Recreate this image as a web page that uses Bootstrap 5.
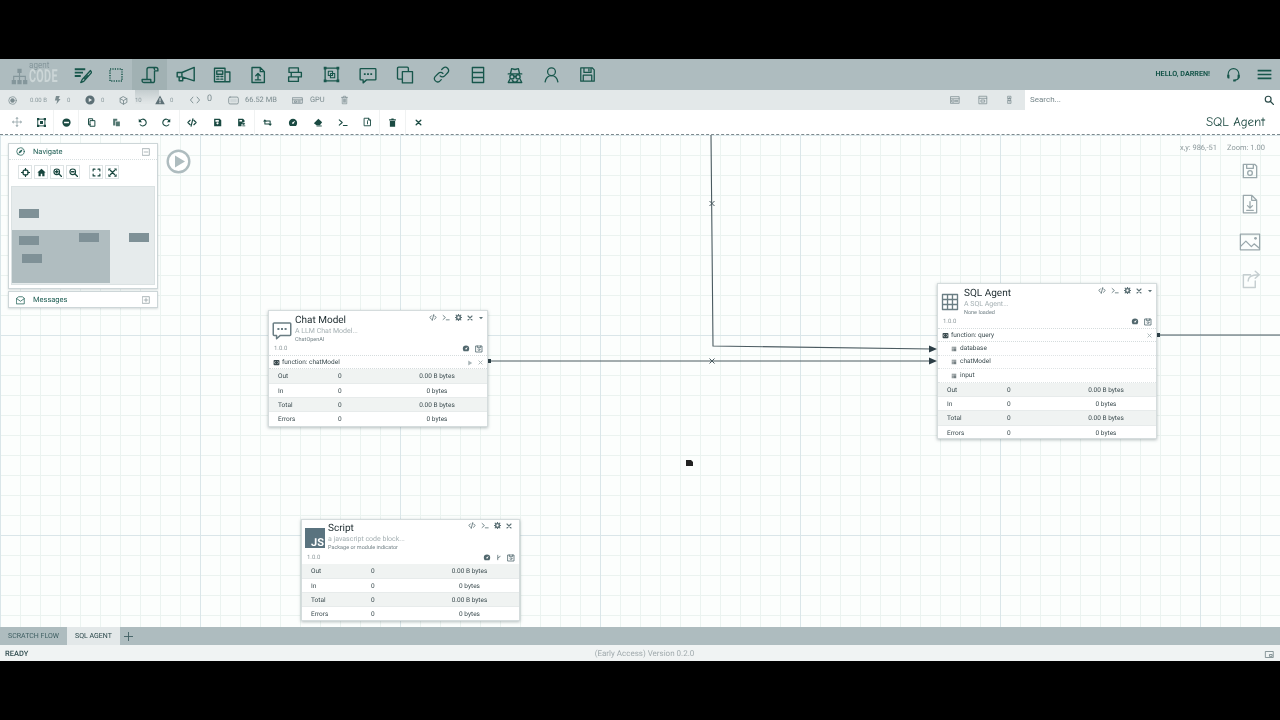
<!DOCTYPE html>
<html lang="en">
<head>
<meta charset="utf-8">
<title>Agent Code</title>
<link href="https://cdn.jsdelivr.net/npm/bootstrap@5.3.0/dist/css/bootstrap.min.css" rel="stylesheet">
<style>
html,body{height:100%;overflow:hidden}
body{background:#000;font-family:Roboto,"Liberation Sans",sans-serif;color:#33454a;text-rendering:geometricPrecision}
.frame{height:720px;padding:59px 0}
.app{height:602px;background:#fff;filter:blur(.3px)}
.ic{display:block;fill:none;stroke:currentColor;stroke-width:1.8;stroke-linecap:round;stroke-linejoin:round}
.solid{fill:currentColor;stroke:none}

.topbar{height:31px;background:#aebcbf;color:#17564b;flex:none}
.logo{width:66px;height:31px;padding-left:11px;color:#84969b;flex:none}
.logo-words{line-height:1;margin-left:1px;margin-top:-4px}
.logo-a{font-size:9.500px;color:#84969b;line-height:8px;display:block;margin-left:0;transform:scaleX(.85);transform-origin:left}
.logo-c{font-size:18px;font-weight:700;color:#ccd6d7;display:block;line-height:14px;transform:scaleX(.6);transform-origin:left;width:28px;letter-spacing:.5px}
.navcell{width:36.6px;height:31px;display:flex;align-items:center;justify-content:center;flex:none}
.navcell.tight{width:33px}
.navcell.on{background:#a1b1b3;width:35px}
.hello{font-size:7.200px;font-weight:700;color:#17564b;white-space:nowrap;margin-right:16px}
.ghost{position:absolute;left:135px;top:31px;width:24px;height:14px;background:linear-gradient(#bcc6c8,#dfe4e5 90%);opacity:.8}

.statusbar{height:20px;background:#e3e8e9;color:#7c8c90;flex:none;font-size:7.500px}
.st{position:relative;display:flex;align-items:center;height:20px;flex:none}
.st-tiny{font-size:6px;color:#8a999d}
.st-num{font-size:9px}
.searchwrap{width:255px;height:20px;background:#fff;padding:0 6px 0 5px}
.searchwrap input{border:0;outline:0;font-size:8px;width:200px;padding:0;background:transparent;color:#77878b;font-family:inherit}
.searchwrap input::placeholder{color:#77878b;opacity:1}

.toolbar{height:25px;background:#fff;border-bottom:1px dashed #7d8a8e;flex:none;color:#1a4a42}
.tb{width:25.1px;height:24px;display:flex;align-items:center;justify-content:center;flex:none}
.tb-first{margin-left:4px}
.tb-sep{border-right:1px solid #f0f2f2}
.flowtitle{font-family:"Comic Sans MS","Comic Neue",cursive;font-size:13px;color:#17453d;margin-right:15px;padding-top:1px;white-space:nowrap}

.canvas{position:relative;flex:1 1 auto;min-height:0;overflow:hidden;background-color:#fcfefd}
.gridlines{position:absolute;inset:0;background-image:
linear-gradient(to right,#dae6e9 1px,transparent 1px),linear-gradient(to bottom,#dae6e9 1px,transparent 1px),
linear-gradient(to right,#ebf3f0 1px,transparent 1px),linear-gradient(to bottom,#ebf3f0 1px,transparent 1px);
background-size:200px 200px,200px 200px,20px 20px,20px 20px}
.wires{position:absolute;left:0;top:0;width:1280px;height:492px}
.coords{position:absolute;top:7px;left:1180px;font-size:7.500px;color:#8b989b;white-space:nowrap;display:flex;gap:10px}
.rightdock{position:absolute;left:1239px;top:28px;width:22px;color:#9aa8ac;display:flex;flex-direction:column;align-items:center}
.dock-a{margin-top:15px}
.dock-b{margin-top:17px}
.dock-c{color:#c5ced0}
.runbtn{position:absolute;left:166px;top:14px;color:#aebcbf}

.panel{position:absolute;left:8px;width:150px;background:#fff;border:1px solid #cdd6d8;box-shadow:0 1px 2px rgba(60,80,85,.2)}
.panel-h{height:16px;padding:0 7px;font-size:7.500px;color:#1c5c52;gap:8px}
.nav-panel{top:8px;height:146px}
.msg-panel{top:156px;height:17px}
.panel-h .end{margin-left:auto;color:#7b8a8e}
.panel-nav{border-bottom:1px dotted #d8dfe0}
.navbtns{height:26px;padding:5px 0 0 9px;gap:2px}
.navbtn{width:14px;height:14px;border:1px solid #dde3e4;display:flex;align-items:center;justify-content:center;color:#17453d}
.navbtn.gap{margin-left:7px}
.minimap{position:relative;margin:0 2px;height:99px;background:#e6ebec;border:1px solid #dbe2e3}
.mm-view{position:absolute;left:0;top:43px;width:98px;height:53px;background:#b0bdc0}
.mm-n{position:absolute;width:20px;height:9px;background:#7f9197}

.node{position:absolute;background:#fff;border:1px solid #d5dcdd;box-shadow:0 1px 3px rgba(50,70,75,.35)}
.chat-node{left:268px;top:175px;width:220px;height:117px}
.sql-node{left:937px;top:148px;width:220px;height:156px}
.js-node{left:301px;top:384px;width:219px;height:102px}
.js-node .n-head{padding-top:3px}
.n-head{height:33px;padding:4px 3px 0 3px}
.n-icon{width:20px;margin-right:3px;padding-top:5px;color:#6a7d83;flex:none}
.n-title{font-size:10px;line-height:12px;color:#1c2a2e}
.n-sub{font-size:7px;line-height:9px;color:#a5b0b3}
.n-pkg{font-size:5.500px;line-height:8px;color:#748388}
.n-acts{margin-left:auto;gap:5px;color:#5f7378;margin-top:-1px;align-self:flex-start}
.n-ver{height:11px;padding:0 4px 2px 5px;font-size:6px;color:#8d999c}
.n-ver .r{margin-left:auto;gap:5px;color:#52686e}
.n-fn{height:14px;padding:1px 4px 0;font-size:6.500px;border-top:1px dotted #d5dcdd;border-bottom:1px dotted #d5dcdd;color:#3a4a4e;gap:2px}
.n-fn .r{margin-left:auto;gap:5px;color:#a9b5b8}
.n-p{height:13.500px;padding:1px 0 0 13px;font-size:6.500px;color:#3a4a4e;border-bottom:1px dotted #dfe4e5;gap:3px}
.tbl{table-layout:fixed;--bs-table-striped-bg:#f0f3f2;--bs-table-bg:transparent;--bs-table-border-color:#e3e8e8;--bs-table-color:#3a4a4e;--bs-table-striped-color:#3a4a4e;font-size:6.500px;margin:0}
.tbl td{height:14.200px;padding:1px 0 0;line-height:10px;vertical-align:middle;border-bottom:1px solid #e7ebeb}
.tbl tr:last-child td{border-bottom:0}
.tbl td:nth-child(1){width:62px;padding-left:9px}
.tbl td:nth-child(2){width:56px;padding-left:7px}
.tbl td:nth-child(3){text-align:center}
.jsbox{width:20px;height:20px;background:#5a737f;color:#fff;font-weight:700;font-size:11px;line-height:11px;text-align:right;padding:9px 1px 0 0;margin-top:5px}

.tabsbar{height:18px;background:#aebcbf;flex:none;font-size:7px;color:#3f5f62}
.tabx{height:18px;display:flex;align-items:center;justify-content:center;white-space:nowrap;width:67px}
.tabx.on{background:#e3e8e9;color:#1f3d40;width:53px}
.footbar{height:16px;background:#f0f3f3;flex:none;font-size:7.500px;padding:2px 5px 0}
.foot-side{flex:1 1 0}
.foot-ready{color:#2e4a4d;font-weight:500}
.foot-ver{color:#a0aaad;font-size:8px;padding-left:9px}
</style>
</head>
<body>
<svg width="0" height="0" class="position-absolute">
<defs>
<symbol id="notes" viewBox="0 0 24 24"><path class="solid" d="M1 3h14v2.600H1zM1 7.500h11v2.600H1zM1 12h8v2.600H1z"/><path d="M22 6 11 18l-2 4 4-1.500L23.500 8.500zM13.500 15.500l2 2.200M16 15.500l-1.600 3M18.500 13l-2 2"/></symbol>
<symbol id="dash" viewBox="0 0 24 24"><rect x="4" y="4" width="16" height="16" stroke-width="2" stroke-dasharray="1.600 1.600" stroke-linecap="butt"/></symbol>
<symbol id="scroll" viewBox="0 0 24 24"><path d="M8 18V4.500A2.500 2.500 0 0 1 10.500 2H20a2.500 2.500 0 0 1 2.500 2.500V6.500H18V19.500A2.500 2.500 0 0 1 15.500 22H4a2.500 2.500 0 0 1-2.500-2.500V18H13v1.500A2.500 2.500 0 0 0 15.500 22M18 4.500A2.500 2.500 0 0 0 15.500 2"/></symbol>
<symbol id="mega" viewBox="0 0 24 24"><path d="M1.500 9.500h6L23 3v17L7.500 15h-6zM7.500 9.500V15M4 15v5h4.500v-4.200"/></symbol>
<symbol id="news" viewBox="0 0 24 24"><path d="M2 3h14v18H2zM16 8h6.500v13H16"/><path d="M5 6.500h8V11H5zM5 14h3M5 17.500h3M10.500 14h2.500M10.500 17.500h2.500"/></symbol>
<symbol id="fileup" viewBox="0 0 24 24"><path d="M4 2h11l5.500 5.500V22H4zM15 2v5.500h5.500"/><path d="M12 17v-6.500M9 13l3-3 3 3M8.500 18.500h7"/></symbol>
<symbol id="stack" viewBox="0 0 24 24"><path d="M4 2.500h12.500v6H4zM7 8.500h13.500v6H7zM3.500 14.500h13v6h-13z"/></symbol>
<symbol id="grp" viewBox="0 0 24 24"><path d="M3 3h18v18H3z"/><path d="M7.500 7.500h6v6h-6zM10.500 10.500h6v6h-6z" stroke-width="1.500"/><path class="solid" d="M1 1h4v4H1zM19 1h4v4h-4zM1 19h4v4H1zM19 19h4v4h-4z"/></symbol>
<symbol id="chat" viewBox="0 0 24 24"><path d="M2.500 3.500h19a1 1 0 0 1 1 1v13a1 1 0 0 1-1 1H10l-4.500 4v-4h-3a1 1 0 0 1-1-1v-13a1 1 0 0 1 1-1z"/><path class="solid" d="M6.500 9.500h2.400v2.400H6.500zM10.800 9.500h2.400v2.400h-2.400zM15.100 9.500h2.400v2.400h-2.400z"/></symbol>
<symbol id="copy" viewBox="0 0 24 24"><path d="M8.500 7.500h13.500v15H8.500zM8.500 17.500H3.500a1.500 1.500 0 0 1-1.500-1.500V3a1.500 1.500 0 0 1 1.500-1.500H15a1.500 1.500 0 0 1 1.500 1.500v4.500"/></symbol>
<symbol id="link" viewBox="0 0 24 24"><path d="M10 14a4.500 4.500 0 0 0 6.500 0l4.500-4.800a4.600 4.600 0 0 0-6.500-6.400L12.300 5M14 10.500a4.500 4.500 0 0 0-6.500 0L3 15a4.600 4.600 0 0 0 6.500 6.400l2.200-2.200"/></symbol>
<symbol id="rows" viewBox="0 0 24 24"><path d="M4.500 2h15v20h-15zM4.500 8.700h15M4.500 15.300h15"/></symbol>
<symbol id="spy" viewBox="0 0 24 24"><path d="M3 10.500h18M6 10l1.500-6.500 4.500 1.200 4.500-1.200L18 10"/><circle cx="8" cy="14.500" r="2.800"/><circle cx="16" cy="14.500" r="2.800"/><path d="M10.800 14h2.400M5 18l-2 4h18l-2-4M8.500 19.500l3.500 2.500 3.500-2.500"/></symbol>
<symbol id="user" viewBox="0 0 24 24"><circle cx="12" cy="8" r="5.500"/><path d="M3 22.500c1-5.500 4.500-9 9-9s8 3.500 9 9"/></symbol>
<symbol id="disk" viewBox="0 0 24 24"><path d="M2.500 2.500h16l3 3v16h-19zM7 2.500v6.500h10V2.500M6 21.500V13h12v8.500M14 4.500v2.500"/></symbol>
<symbol id="headset" viewBox="0 0 24 24"><path d="M3.500 15V11a8.500 8.500 0 0 1 17 0v4M20.500 15c0 3-3 5.500-6 6"/><path class="solid" d="M2 12.500h3.500v6H4a2 2 0 0 1-2-2zM18.500 12.500H22v4a2 2 0 0 1-2 2h-1.500zM11.500 20h4v3h-4z"/></symbol>
<symbol id="burger" viewBox="0 0 24 24"><path class="solid" d="M1 4.500h22v2.600H1zM1 10.700h22v2.600H1zM1 16.900h22v2.600H1z"/></symbol>
<symbol id="org" viewBox="0 0 24 24"><path class="solid" d="M9 1h6v6H9zM1 17h6v6H1zM9 17h6v6H9zM17 17h6v6h-6zM11.200 7h1.600v4H21v6h-1.600v-4.400h-6.600V17h-1.600v-4.400H4.600V17H3v-6h8.200z"/></symbol>
<symbol id="dot" viewBox="0 0 24 24"><circle cx="12" cy="12" r="10" stroke-width="2"/><circle class="solid" cx="12" cy="12" r="6"/></symbol>
<symbol id="bolt" viewBox="0 0 24 24"><path class="solid" d="M8 1h10l-3 8h5L9 23l2-10H5z"/></symbol>
<symbol id="playc" viewBox="0 0 24 24"><path class="solid" fill-rule="evenodd" d="M12 1a11 11 0 1 1 0 22 11 11 0 0 1 0-22zM9 7v10l8-5z"/></symbol>
<symbol id="cube" viewBox="0 0 24 24"><path d="M12 2l9 5v10l-9 5-9-5V7z" stroke-width="2.400"/><path d="M3 7l9 5 9-5M12 12v10" stroke-width="2.400"/></symbol>
<symbol id="warn" viewBox="0 0 24 24"><path class="solid" fill-rule="evenodd" d="M12 1l11.500 21H.5zM10.700 8v7.500h2.600V8zM10.700 17v2.500h2.600V17z"/></symbol>
<symbol id="code" viewBox="0 0 24 24"><path d="M7 5l-6 7 6 7M17 5l6 7-6 7" stroke-width="2.200"/></symbol>
<symbol id="mem" viewBox="0 0 24 24"><rect x="1.500" y="4.500" width="21" height="15" rx="3"/><rect x="5" y="8" width="14" height="8" fill="#cfd7d9" stroke="none"/></symbol>
<symbol id="gpu" viewBox="0 0 24 24"><path d="M1.500 6h21v12h-21zM1.500 10.500h21M6 13h4v3H6zM13 13h5M13 15.500h5"/></symbol>
<symbol id="trashl" viewBox="0 0 24 24"><path d="M4 5h16M9 5V2h6v3M6 5v17h12V5M9.500 9v9M12 9v9M14.500 9v9"/></symbol>
<symbol id="idc" viewBox="0 0 24 24"><path d="M2 4h20v16H2zM2 9h20M5 12h5v5H5zM13 13h6M13 16h6"/></symbol>
<symbol id="cal" viewBox="0 0 24 24"><path d="M3 3h18v18H3zM3 8h18M8 12h8v5H8z"/></symbol>
<symbol id="tower" viewBox="0 0 24 24"><path d="M8 2h8v6H8zM9 8h6v5H9zM8 13h8v8H8zM11 5h2M10.500 17h3"/></symbol>
<symbol id="search" viewBox="0 0 24 24"><circle cx="10" cy="10" r="7" stroke-width="2.800"/><path d="M15 15l7.500 7.500" stroke-width="3.200"/></symbol>
<symbol id="move" viewBox="0 0 24 24"><path d="M12 2v20M2 12h20" stroke-width="2"/><path class="solid" d="M12 0l4 4H8zM12 24l-4-4h8zM0 12l4-4v8zM24 12l-4 4V8z"/></symbol>
<symbol id="sel" viewBox="0 0 24 24"><path stroke-width="2.400" d="M3 3h18v18H3z"/><path class="solid" d="M0 0h6v6H0zM18 0h6v6h-6zM0 18h6v6H0zM18 18h6v6h-6zM8 8h8v8H8z"/></symbol>
<symbol id="minusc" viewBox="0 0 24 24"><path class="solid" fill-rule="evenodd" d="M12 1a11 11 0 1 1 0 22 11 11 0 0 1 0-22zM5.500 10v4h13v-4z"/></symbol>
<symbol id="cpy" viewBox="0 0 24 24"><path stroke-width="2.600" d="M9 7h12v15H9zM9 18H4V2h11v5"/></symbol>
<symbol id="paste" viewBox="0 0 24 24"><path class="solid" d="M3 2h11v5H9v13H3zM10.500 9H21v13H10.500z" opacity=".75"/></symbol>
<symbol id="undo" viewBox="0 0 24 24"><path stroke-width="3" d="M5.500 7A9 9 0 1 1 6 18"/><path class="solid" d="M2 2v9h9z"/></symbol>
<symbol id="redo" viewBox="0 0 24 24"><path stroke-width="3" d="M18.500 7A9 9 0 1 0 18 18"/><path class="solid" d="M22 2v9h-9z"/></symbol>
<symbol id="codeb" viewBox="0 0 24 24"><path stroke-width="3" d="M7 6l-6 6 6 6M17 6l6 6-6 6M14.500 2l-5 20"/></symbol>
<symbol id="save" viewBox="0 0 24 24"><path class="solid" fill-rule="evenodd" d="M3 2h15l4 4v16H3zM6.500 5v5h9V5zM9 14a3 3 0 1 0 6 0 3 3 0 0 0-6 0z"/></symbol>
<symbol id="saveas" viewBox="0 0 24 24"><path class="solid" fill-rule="evenodd" d="M3 2h13l4 4v5h-5v5h-3v6H3zM6.500 5v4h7V5z"/><path class="solid" d="M14 14h3v-2l5 3.500-5 3.500v-2h-3zM14 20h8v2h-8z"/></symbol>
<symbol id="retw" viewBox="0 0 24 24"><path stroke-width="2.800" d="M5 8v8h11M19 16V8H8"/><path class="solid" d="M0 9l5-6 5 6zM14 15h10l-5 6z"/></symbol>
<symbol id="gauge" viewBox="0 0 24 24"><path class="solid" fill-rule="evenodd" d="M12 2a11 11 0 0 1 11 11c0 3-1 5.500-3 8H4c-2-2.500-3-5-3-8A11 11 0 0 1 12 2zM11 11a2.500 2.500 0 1 0 3.500 2.500L18 7z"/></symbol>
<symbol id="erase" viewBox="0 0 24 24"><path class="solid" d="M13 2l10 9-6 8H8l-7-5z"/><path class="solid" d="M8 20h14v2.500H8z"/></symbol>
<symbol id="term" viewBox="0 0 24 24"><path stroke-width="2.800" d="M2 5l8 7-8 7M13 20h10"/></symbol>
<symbol id="finfo" viewBox="0 0 24 24"><path stroke-width="2.400" d="M4 2h11l5 5v15H4zM15 2v5h5M12 11v6"/><path class="solid" d="M10.500 8h3v2h-3z"/></symbol>
<symbol id="trash" viewBox="0 0 24 24"><path class="solid" d="M3 3.500h6V1.500h6v2h6v3H3zM5 8h14v15H5z"/></symbol>
<symbol id="xx" viewBox="0 0 24 24"><path stroke-width="4.500" d="M4 4l16 16M20 4L4 20"/></symbol>
<symbol id="compass" viewBox="0 0 24 24"><circle cx="12" cy="12" r="10" stroke-width="2"/><path class="solid" d="M18 6l-4 8-8 4 4-8z"/></symbol>
<symbol id="minusb" viewBox="0 0 24 24"><path stroke-width="1.800" d="M2 2h20v20H2zM6.500 12h11"/></symbol>
<symbol id="plusb" viewBox="0 0 24 24"><path stroke-width="1.800" d="M2 2h20v20H2zM6.500 12h11M12 6.500v11"/></symbol>
<symbol id="mail" viewBox="0 0 24 24"><path stroke-width="2" d="M2 6l5-4h10l5 4v15H2zM2 7l10 7 10-7"/></symbol>
<symbol id="crossh" viewBox="0 0 24 24"><circle cx="12" cy="12" r="7" stroke-width="3"/><path stroke-width="3" d="M12 0v6M12 18v6M0 12h6M18 12h6"/></symbol>
<symbol id="home" viewBox="0 0 24 24"><path class="solid" d="M12 2l11 10h-3v10h-6v-7h-4v7H4V12H1z"/></symbol>
<symbol id="zin" viewBox="0 0 24 24"><circle cx="10" cy="10" r="7.500" stroke-width="3"/><path stroke-width="3.500" d="M16 16l7 7M6.500 10h7M10 6.500v7"/></symbol>
<symbol id="zout" viewBox="0 0 24 24"><circle cx="10" cy="10" r="7.500" stroke-width="3"/><path stroke-width="3.500" d="M16 16l7 7M6.500 10h7"/></symbol>
<symbol id="corners" viewBox="0 0 24 24"><path stroke-width="3" d="M3 8V3h5M16 3h5v5M21 16v5h-5M8 21H3v-5"/></symbol>
<symbol id="expand" viewBox="0 0 24 24"><path stroke-width="3.500" d="M6 6l12 12M18 6L6 18"/><path class="solid" d="M1 1h7L1 8zM23 1v7l-7-7zM1 23v-7l7 7zM23 23h-7l7-7z"/></symbol>
<symbol id="gear" viewBox="0 0 24 24"><circle cx="12" cy="12" r="6.500" stroke-width="5"/><path stroke-width="4" d="M12 1v3M12 20v3M1 12h3M20 12h3M4 4l2 2M18 18l2 2M20 4l-2 2M6 18l-2 2"/></symbol>
<symbol id="caret" viewBox="0 0 24 24"><path class="solid" d="M4 8h16l-8 9z"/></symbol>
<symbol id="calc" viewBox="0 0 24 24"><path stroke-width="2.400" d="M3 3h18v18H3zM7 3v5h10V3"/><circle cx="12" cy="14" r="3"/></symbol>
<symbol id="tbl" viewBox="0 0 24 24"><path stroke-width="1.800" d="M2 2h20v20H2zM2 8.700h20M2 15.300h20M8.700 2v20M15.300 2v20"/></symbol>
<symbol id="fnic" viewBox="0 0 24 24"><rect x="2" y="3" width="20" height="18" rx="3" class="solid"/><path d="M8 8l-3 4 3 4M16 8l3 4-3 4" stroke="#fff" stroke-width="2"/></symbol>
<symbol id="param" viewBox="0 0 24 24"><path class="solid" d="M3 3h18v18H3z" opacity=".7"/><path stroke="#fff" stroke-width="2" d="M3 8h18M8 8v13"/></symbol>
<symbol id="branch" viewBox="0 0 24 24"><path stroke-width="3" d="M7 3v18M7 14c0-4 10-2 10-7"/></symbol>
<symbol id="play" viewBox="0 0 24 24"><path class="solid" d="M5 2l16 10L5 22z"/></symbol>
<symbol id="fdisk" viewBox="0 0 24 24"><path stroke-width="2" d="M2 2h17l3 3v17H2zM7 2v6h10V2"/><circle cx="12" cy="15" r="3.500" stroke-width="2"/></symbol>
<symbol id="fdown" viewBox="0 0 24 24"><path stroke-width="1.500" d="M4 1.500h10l6 6v15H4zM14 1.500v6h6M12 9v8M9 14l3 3 3-3M8 19.500h8"/></symbol>
<symbol id="pic" viewBox="0 0 24 24"><path stroke-width="1.400" d="M1.500 3.500h21v17h-21zM1.500 17l6-6 6 6 3-3 6 5"/><circle cx="18" cy="8" r="1.500" class="solid"/></symbol>
<symbol id="share" viewBox="0 0 24 24"><path stroke-width="1.800" d="M18 14v8H3V6h9M9 14c0-5 4-8 13-8M18 1.500 23 6l-5 4.500"/></symbol>
</defs>
</svg>

<div class="frame">
<div class="app d-flex flex-column">

<div class="topbar d-flex align-items-center position-relative">
  <div class="logo d-flex align-items-center">
    <svg class="ic mt-1" width="17" height="19"><use href="#org"/></svg>
    <div class="logo-words"><span class="logo-a">agent</span><span class="logo-c">CODE</span></div>
  </div>
  <div class="navcell tight"><svg class="ic" width="18" height="18"><use href="#notes"/></svg></div>
  <div class="navcell tight"><svg class="ic" width="18" height="18"><use href="#dash"/></svg></div>
  <div class="navcell on"><svg class="ic" width="18" height="18"><use href="#scroll"/></svg></div>
  <div class="navcell"><svg class="ic" width="19" height="19"><use href="#mega"/></svg></div>
  <div class="navcell"><svg class="ic" width="18" height="18"><use href="#news"/></svg></div>
  <div class="navcell"><svg class="ic" width="18" height="18"><use href="#fileup"/></svg></div>
  <div class="navcell"><svg class="ic" width="18" height="18"><use href="#stack"/></svg></div>
  <div class="navcell"><svg class="ic" width="17" height="17"><use href="#grp"/></svg></div>
  <div class="navcell"><svg class="ic" width="18" height="18"><use href="#chat"/></svg></div>
  <div class="navcell"><svg class="ic" width="18" height="18"><use href="#copy"/></svg></div>
  <div class="navcell"><svg class="ic" width="17" height="17"><use href="#link"/></svg></div>
  <div class="navcell"><svg class="ic" width="18" height="18"><use href="#rows"/></svg></div>
  <div class="navcell"><svg class="ic" width="18" height="18"><use href="#spy"/></svg></div>
  <div class="navcell"><svg class="ic" width="17" height="17"><use href="#user"/></svg></div>
  <div class="navcell"><svg class="ic" width="17" height="17"><use href="#disk"/></svg></div>
  <div class="ms-auto d-flex align-items-center">
    <span class="hello">HELLO, DARREN!</span>
    <svg class="ic" width="15" height="15"><use href="#headset"/></svg>
    <svg class="ic ms-3 me-2" width="15" height="15"><use href="#burger"/></svg>
  </div>
  <div class="ghost"></div>
</div>

<div class="statusbar d-flex align-items-center">
  <div class="st" style="width:30px;padding-left:8px"><svg class="ic" width="9" height="9"><use href="#dot"/></svg></div>
  <div class="st st-tiny" style="width:22.500px">0.00 B</div>
  <div class="st" style="width:14.500px"><svg class="ic" width="9" height="10"><use href="#bolt"/></svg></div>
  <div class="st st-tiny" style="width:18px">0</div>
  <div class="st" style="width:16px;color:#5d7076"><svg class="ic" width="10" height="10"><use href="#playc"/></svg></div>
  <div class="st st-tiny" style="width:17.500px">0</div>
  <div class="st" style="width:16.500px"><svg class="ic" width="9" height="9"><use href="#cube"/></svg></div>
  <div class="st st-tiny" style="width:20px">10</div>
  <div class="st" style="width:15px;color:#5d7076"><svg class="ic" width="10" height="10"><use href="#warn"/></svg></div>
  <div class="st st-tiny" style="width:20px">0</div>
  <div class="st" style="width:17px"><svg class="ic" width="10" height="10"><use href="#code"/></svg></div>
  <div class="st st-num" style="width:21px">0</div>
  <div class="st" style="width:17px"><svg class="ic" width="11" height="11"><use href="#mem"/></svg></div>
  <div class="st" style="width:47px">66.52 MB</div>
  <div class="st" style="width:18px"><svg class="ic" width="11" height="11"><use href="#gpu"/></svg></div>
  <div class="st" style="width:30px">GPU</div>
  <div class="st"><svg class="ic" width="9" height="10"><use href="#trashl"/></svg></div>
  <div class="ms-auto d-flex align-items-center">
    <div class="st" style="width:28px"><svg class="ic" width="10" height="10"><use href="#idc"/></svg></div>
    <div class="st" style="width:27px"><svg class="ic" width="10" height="10"><use href="#cal"/></svg></div>
    <div class="st" style="width:20px"><svg class="ic" width="9" height="10"><use href="#tower"/></svg></div>
    <div class="searchwrap d-flex align-items-center justify-content-between">
      <input type="text" placeholder="Search...">
      <svg class="ic" width="10" height="10" style="color:#2a4a48"><use href="#search"/></svg>
    </div>
  </div>
</div>

<div class="toolbar d-flex align-items-center">
  <div class="tb tb-first" style="color:#9aa9ad"><svg class="ic" width="10" height="10"><use href="#move"/></svg></div>
  <div class="tb tb-sep"><svg class="ic" width="9" height="9"><use href="#sel"/></svg></div>
  <div class="tb tb-sep"><svg class="ic" width="9" height="9"><use href="#minusc"/></svg></div>
  <div class="tb"><svg class="ic" width="9" height="9"><use href="#cpy"/></svg></div>
  <div class="tb"><svg class="ic" width="9" height="9"><use href="#paste"/></svg></div>
  <div class="tb"><svg class="ic" width="9" height="9"><use href="#undo"/></svg></div>
  <div class="tb tb-sep"><svg class="ic" width="9" height="9"><use href="#redo"/></svg></div>
  <div class="tb"><svg class="ic" width="10" height="9"><use href="#codeb"/></svg></div>
  <div class="tb"><svg class="ic" width="9" height="9"><use href="#save"/></svg></div>
  <div class="tb tb-sep"><svg class="ic" width="9" height="9"><use href="#saveas"/></svg></div>
  <div class="tb"><svg class="ic" width="11" height="9"><use href="#retw"/></svg></div>
  <div class="tb"><svg class="ic" width="10" height="9"><use href="#gauge"/></svg></div>
  <div class="tb"><svg class="ic" width="10" height="9"><use href="#erase"/></svg></div>
  <div class="tb"><svg class="ic" width="10" height="9"><use href="#term"/></svg></div>
  <div class="tb tb-sep"><svg class="ic" width="9" height="10"><use href="#finfo"/></svg></div>
  <div class="tb tb-sep"><svg class="ic" width="9" height="9"><use href="#trash"/></svg></div>
  <div class="tb"><svg class="ic" width="7" height="7"><use href="#xx"/></svg></div>
  <div class="flowtitle ms-auto">SQL Agent</div>
</div>

<div class="canvas">
  <div class="gridlines"></div>
  <svg class="wires" viewBox="0 0 1280 492">
    <g fill="none" stroke="#4a5a60" stroke-width="1.100">
      <path d="M711 0 L713 211 L932 214"/>
      <path d="M488 226 H932"/>
      <path d="M1157 200 H1280"/>
      <path d="M709.500 66l5 5M714.500 66l-5 5M709.500 223.500l5 5M714.500 223.500l-5 5" stroke-width="1"/>
    </g>
    <path fill="#2c3e46" d="M929 210.500l8 3.500-8 3.500zM929 222.500l8 3.500-8 3.500zM488 224h3v4h-3zM1157 198h3v4h-3z"/>
    <path fill="#222" d="M686 325h5l2 2v4h-7z"/>
  </svg>
  <div class="coords"><span>x,y: 986,-51</span><span>Zoom: 1.00</span></div>
  <div class="runbtn"><svg width="25" height="25" viewBox="0 0 25 25"><circle cx="12.500" cy="12.500" r="10.800" fill="#fff" stroke="currentColor" stroke-width="2.400"/><path d="M9 6.500l10 6-10 6z" fill="currentColor"/></svg></div>

  <div class="rightdock">
    <svg class="ic" width="16" height="16"><use href="#fdisk"/></svg>
    <svg class="ic dock-a" width="20" height="20"><use href="#fdown"/></svg>
    <svg class="ic dock-b" width="22" height="22"><use href="#pic"/></svg>
    <svg class="ic dock-b dock-c" width="19" height="19"><use href="#share"/></svg>
  </div>

  <div class="panel nav-panel">
    <div class="panel-h panel-nav d-flex align-items-center"><svg class="ic" width="9" height="9"><use href="#compass"/></svg><span>Navigate</span><svg class="ic end" width="8" height="8"><use href="#minusb"/></svg></div>
    <div class="navbtns d-flex align-items-start">
      <div class="navbtn"><svg class="ic" width="9" height="9"><use href="#crossh"/></svg></div>
      <div class="navbtn"><svg class="ic" width="9" height="9"><use href="#home"/></svg></div>
      <div class="navbtn"><svg class="ic" width="9" height="9"><use href="#zin"/></svg></div>
      <div class="navbtn"><svg class="ic" width="9" height="9"><use href="#zout"/></svg></div>
      <div class="navbtn gap"><svg class="ic" width="9" height="9"><use href="#corners"/></svg></div>
      <div class="navbtn"><svg class="ic" width="9" height="9"><use href="#expand"/></svg></div>
    </div>
    <div class="minimap">
      <div class="mm-view"></div>
      <div class="mm-n" style="left:7px;top:22px"></div>
      <div class="mm-n" style="left:7px;top:49px"></div>
      <div class="mm-n" style="left:67px;top:46px"></div>
      <div class="mm-n" style="left:117px;top:46px"></div>
      <div class="mm-n" style="left:10px;top:67px"></div>
    </div>
  </div>
  <div class="panel msg-panel">
    <div class="panel-h d-flex align-items-center"><svg class="ic" width="9" height="9"><use href="#mail"/></svg><span>Messages</span><svg class="ic end" width="8" height="8"><use href="#plusb"/></svg></div>
  </div>

  <div class="node chat-node">
    <div class="n-head d-flex">
      <div class="n-icon"><svg class="ic" width="20" height="20"><use href="#chat"/></svg></div>
      <div>
        <div class="n-title">Chat Model</div>
        <div class="n-sub">A LLM Chat Model...</div>
        <div class="n-pkg">ChatOpenAI</div>
      </div>
      <div class="n-acts d-flex align-items-center">
        <svg class="ic" width="8" height="7"><use href="#codeb"/></svg>
        <svg class="ic" width="8" height="7"><use href="#term"/></svg>
        <svg class="ic" width="7" height="7"><use href="#gear"/></svg>
        <svg class="ic" width="6" height="6"><use href="#xx"/></svg>
        <svg class="ic" width="6" height="6"><use href="#caret"/></svg>
      </div>
    </div>
    <div class="n-ver d-flex align-items-center"><span>1.0.0</span><div class="r d-flex align-items-center"><svg class="ic" width="8" height="7"><use href="#gauge"/></svg><svg class="ic" width="8" height="8"><use href="#calc"/></svg></div></div>
    <div class="n-fn d-flex align-items-center"><svg class="ic" width="7" height="7"><use href="#fnic"/></svg><span>function: chatModel</span><div class="r d-flex align-items-center"><svg class="ic" width="6" height="6"><use href="#play"/></svg><svg class="ic" width="5" height="5"><use href="#xx"/></svg></div></div>
    <table class="table table-striped tbl"><tbody>
      <tr><td>Out</td><td>0</td><td>0.00 B bytes</td></tr>
      <tr><td>In</td><td>0</td><td>0 bytes</td></tr>
      <tr><td>Total</td><td>0</td><td>0.00 B bytes</td></tr>
      <tr><td>Errors</td><td>0</td><td>0 bytes</td></tr>
    </tbody></table>
  </div>

  <div class="node sql-node">
    <div class="n-head d-flex">
      <div class="n-icon"><svg class="ic" width="18" height="18"><use href="#tbl"/></svg></div>
      <div>
        <div class="n-title">SQL Agent</div>
        <div class="n-sub">A SQL Agent...</div>
        <div class="n-pkg">None loaded</div>
      </div>
      <div class="n-acts d-flex align-items-center">
        <svg class="ic" width="8" height="7"><use href="#codeb"/></svg>
        <svg class="ic" width="8" height="7"><use href="#term"/></svg>
        <svg class="ic" width="7" height="7"><use href="#gear"/></svg>
        <svg class="ic" width="6" height="6"><use href="#xx"/></svg>
        <svg class="ic" width="6" height="6"><use href="#caret"/></svg>
      </div>
    </div>
    <div class="n-ver d-flex align-items-center"><span>1.0.0</span><div class="r d-flex align-items-center"><svg class="ic" width="8" height="7"><use href="#gauge"/></svg><svg class="ic" width="8" height="8"><use href="#calc"/></svg></div></div>
    <div class="n-fn d-flex align-items-center"><svg class="ic" width="7" height="7"><use href="#fnic"/></svg><span>function: query</span><div class="r d-flex align-items-center"><svg class="ic" width="5" height="5"><use href="#xx"/></svg></div></div>
    <div class="n-p d-flex align-items-center"><svg class="ic" width="6" height="6"><use href="#param"/></svg><span>database</span></div>
    <div class="n-p d-flex align-items-center"><svg class="ic" width="6" height="6"><use href="#param"/></svg><span>chatModel</span></div>
    <div class="n-p d-flex align-items-center"><svg class="ic" width="6" height="6"><use href="#param"/></svg><span>input</span></div>
    <table class="table table-striped tbl"><tbody>
      <tr><td>Out</td><td>0</td><td>0.00 B bytes</td></tr>
      <tr><td>In</td><td>0</td><td>0 bytes</td></tr>
      <tr><td>Total</td><td>0</td><td>0.00 B bytes</td></tr>
      <tr><td>Errors</td><td>0</td><td>0 bytes</td></tr>
    </tbody></table>
  </div>

  <div class="node js-node">
    <div class="n-head d-flex">
      <div class="n-icon pt-0"><div class="jsbox">JS</div></div>
      <div>
        <div class="n-title">Script</div>
        <div class="n-sub">a javascript code block...</div>
        <div class="n-pkg">Package or module indicator</div>
      </div>
      <div class="n-acts d-flex align-items-center me-1">
        <svg class="ic" width="8" height="7"><use href="#codeb"/></svg>
        <svg class="ic" width="8" height="7"><use href="#term"/></svg>
        <svg class="ic" width="7" height="7"><use href="#gear"/></svg>
        <svg class="ic" width="6" height="6"><use href="#xx"/></svg>
      </div>
    </div>
    <div class="n-ver d-flex align-items-center"><span>1.0.0</span><div class="r d-flex align-items-center"><svg class="ic" width="8" height="7"><use href="#gauge"/></svg><svg class="ic" width="6" height="7"><use href="#branch"/></svg><svg class="ic" width="8" height="8"><use href="#calc"/></svg></div></div>
    <table class="table table-striped tbl"><tbody>
      <tr><td>Out</td><td>0</td><td>0.00 B bytes</td></tr>
      <tr><td>In</td><td>0</td><td>0 bytes</td></tr>
      <tr><td>Total</td><td>0</td><td>0.00 B bytes</td></tr>
      <tr><td>Errors</td><td>0</td><td>0 bytes</td></tr>
    </tbody></table>
  </div>
</div>

<div class="tabsbar d-flex align-items-center">
  <div class="tabx">SCRATCH FLOW</div>
  <div class="tabx on">SQL AGENT</div>
  <svg class="ic ms-1" width="9" height="9" viewBox="0 0 24 24" style="color:#3f5f62;stroke-width:2.400"><path d="M12 1v22M1 12h22"/></svg>
</div>
<div class="footbar d-flex align-items-center">
  <span class="foot-side foot-ready">READY</span>
  <span class="foot-ver">(Early Access) Version 0.2.0</span>
  <div class="foot-side d-flex justify-content-end"><svg class="ic" width="11" height="9" viewBox="0 0 24 24" style="color:#5a6d72"><path d="M2 4h20v16H2zM13 12h6v5h-6z"/></svg></div>
</div>

</div>
</div>
</body>
</html>
